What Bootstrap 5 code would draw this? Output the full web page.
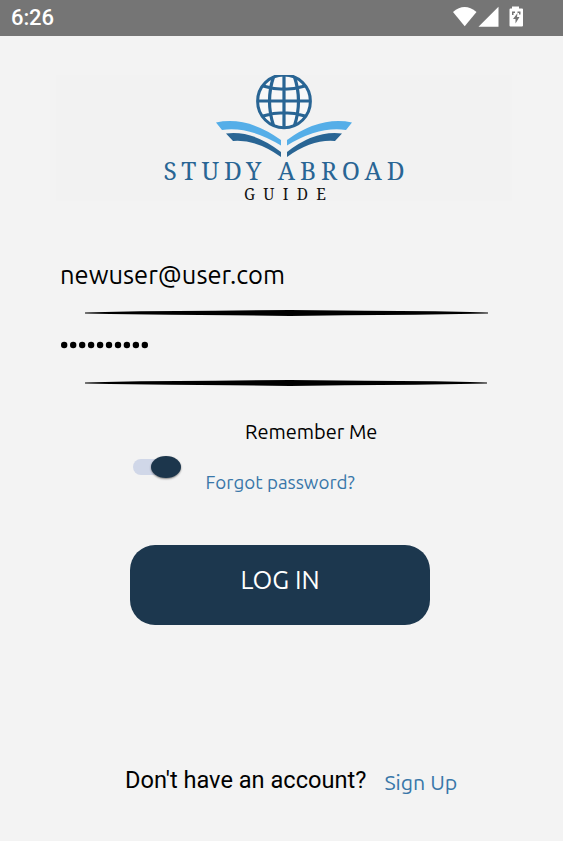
<!DOCTYPE html>
<html lang="en">
<head>
<meta charset="utf-8">
<meta name="viewport" content="width=device-width, initial-scale=1">
<title>Study Abroad Guide</title>
<link href="https://cdn.jsdelivr.net/npm/bootstrap@5.3.0/dist/css/bootstrap.min.css" rel="stylesheet">
<style>
body{background:#f3f3f3;color:#000;font-family:Ubuntu,"Noto Sans",sans-serif;overflow:hidden}
.screen{width:563px;height:841px}
.statusbar{height:36px;background:#757575;padding:0 40px 0 11px;font:500 22px/36px Roboto,sans-serif}
.clock{letter-spacing:-.1px}
.brand{height:126px;margin:39px 51px 0 56px;background:#f2f2f2}
.brand svg,.rule,.statusbar svg{display:block}
.brand svg{overflow:visible}
.email{margin:54px 0 0 60px;height:40px;font-size:25.5px;line-height:40px}
.rule{margin:15px 0 0 85px}
.rule-last{margin-top:20px}
.dots{margin:12px 0 0 61px;height:30px}
.options{margin:32px 0 0 133px;height:80px}
.track{width:43px;height:16px;border-radius:8px;background:#d0d7e8;margin-top:39px}
.knob{width:30px;height:22px;flex:none;margin:-3px 0 0 18px;border-radius:50%;background:#1c364c;box-shadow:0 1px 2px #0007}
.remember{margin:-3px 0 0 69px;font-size:20px;line-height:30px}
.forgot{margin:20px 0 0 29.5px;font-size:18.8px;line-height:30px}
.accent{color:#3977a9}
.login{margin:45px 0 0 130px;width:300px;height:80px;border-radius:25px;background:#1c374e;font-size:25.4px;line-height:36px;padding:0 0 10px}
.login:hover{background:#1c374e}
.signup-row{margin:135px 0 0 125px;height:40px}
.question{font:400 23.6px/40px Roboto,sans-serif}
.signup{margin:2px 0 0 18px;font-size:21.4px;line-height:40px}
</style>
</head>
<body>
<main class="screen d-flex flex-column">
<header class="statusbar d-flex justify-content-between text-white">
<span class="clock">6:26</span>
<svg width="71" height="36" fill="#fff"><path d="M1 12Q12.500 2 24.500 12L12.700 26.300Z"/><path d="M26.500 26.700 46.500 6.700V26.700Z"/><path fill-rule="evenodd" d="M60 6.500h7v2h3q1 0 1 1v16q0 1-1 1H58.500q-1 0-1-1v-16q0-1 1-1H60ZM65.500 13l-4.500 6h2.500v4.500L67.500 17H65Z"/><path fill="#757575" d="M60 11.500h3v1.500h-1.500v2H60ZM65.500 11.500h3v3H67V13h-1.500Z"/></svg>
</header>
<div class="brand">
<svg width="456" height="126" viewBox="56 75 456 126">
<defs><clipPath id="top"><rect x="240" y="75" width="90" height="60"/></clipPath></defs>
<g clip-path="url(#top)"><ellipse cx="284" cy="101" rx="26.500" ry="26.700" fill="#f8f8f8"/>
<g fill="none" stroke="#296594" stroke-width="3"><ellipse cx="284" cy="101.300" rx="26.400" ry="26.400"/><path stroke-width="3.200" d="M284 74v53M257 101h54M273.500 77Q265.500 101 273.500 125.500M294.500 77Q302.500 101 294.500 125.500M263 86Q284 92.500 305 86M263 116Q284 109.500 305 116"/></g></g>
<path fill="#55aee8" d="M216 122.500Q248 116 281 140V145.500Q249 126 222 130ZM352 122.500Q320 116 287 140V145.500Q319 126 346 130Z"/>
<path fill="#296594" d="M226 133.500Q253 130 281 152V157Q256 139 233 141ZM342 133.500Q315 130 287 152V157Q312 139 335 141Z"/>
<g font-family="'Noto Serif','DejaVu Serif Condensed','DejaVu Serif',serif"><text x="163.500" y="180" font-size="24.500" fill="#296594" textLength="241">STUDY ABROAD</text><text x="244" y="200.300" font-size="15.500" fill="#111" textLength="82">GUIDE</text></g>
</svg>
</div>
<div class="email">newuser@user.com</div>
<svg class="rule" width="405" height="8"><path d="M0 2.600 20 2 55 1.300 130 .7 205 0 280 .7 350 1.300 385 2 403 2.600V3.400L375 4 330 4.700 260 5.200 205 6 145 5.200 85 4.700 25 4 0 3.400Z"/></svg>
<div class="dots"><svg width="90" height="30"><circle cx="3.200" cy="15" r="3.200"/><circle cx="12.200" cy="15" r="3.200"/><circle cx="21.200" cy="15" r="3.200"/><circle cx="30.100" cy="15" r="3.200"/><circle cx="39.100" cy="15" r="3.200"/><circle cx="48" cy="15" r="3.200"/><circle cx="57" cy="15" r="3.200"/><circle cx="65.900" cy="15" r="3.200"/><circle cx="74.900" cy="15" r="3.200"/><circle cx="83.800" cy="15" r="3.200"/></svg></div>
<svg class="rule rule-last" width="405" height="8"><path d="M0 2.600 20 2 55 1.300 130 .7 205 0 280 .7 350 1.300 385 2 402 2.600V3.400L375 4 330 4.700 260 5.200 205 6 145 5.200 85 4.700 25 4 0 3.400Z"/></svg>
<div class="options d-flex">
<div class="track flex-shrink-0 d-flex"><div class="knob"></div></div>
<div><div class="remember">Remember Me</div><div class="forgot accent">Forgot password?</div></div>
</div>
<button class="login btn border-0 text-white">LOG IN</button>
<div class="signup-row d-flex"><span class="question">Don't have an account?</span><span class="signup accent">Sign Up</span></div>
</main>
<script src="https://cdn.jsdelivr.net/npm/bootstrap@5.3.0/dist/js/bootstrap.bundle.min.js"></script>
</body>
</html>
